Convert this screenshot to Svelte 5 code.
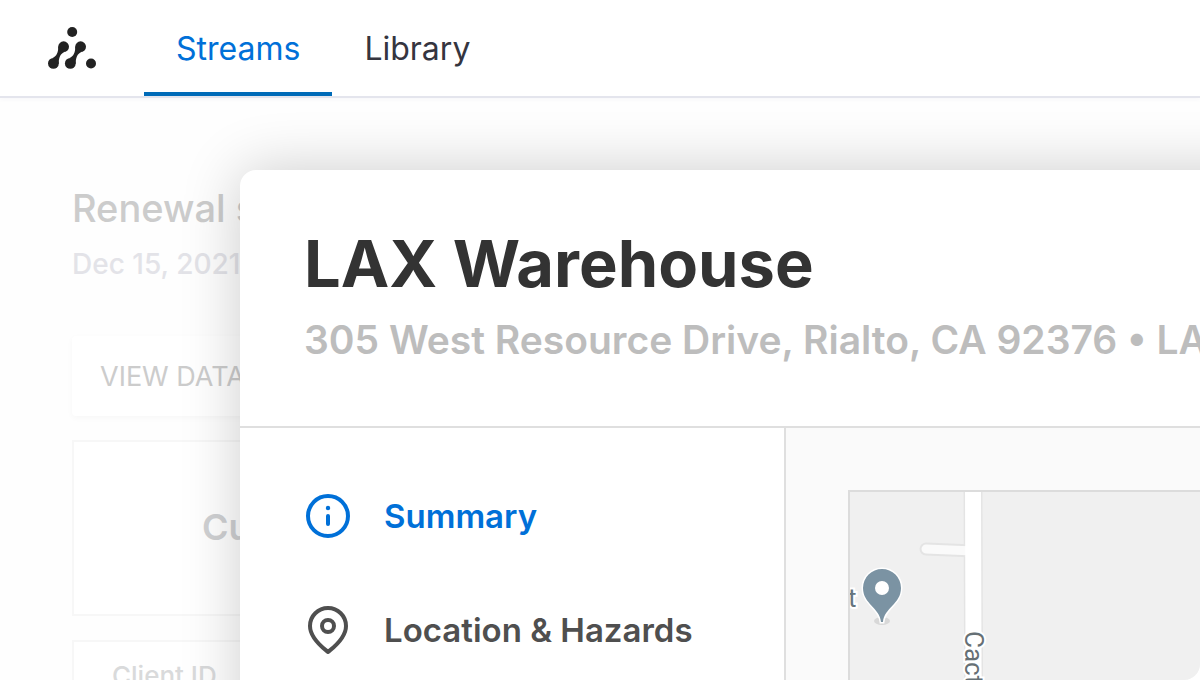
<script>
  let tab = $state('Streams');
  let section = $state('summary');
  const tabs = ['Streams', 'Library'];
</script>

<div class="page">
  <header>
    <a class="logo" href="#home" aria-label="Home">
      <svg width="48" height="42" viewBox="0 0 48 42" fill="#222">
        <circle cx="24.2" cy="5" r="5" />
        <circle cx="15.6" cy="19.7" r="5.4" />
        <circle cx="5.4" cy="36.4" r="5.4" />
        <path d="M10.2 19.500C10.500 25 8.500 29.500 4.600 31L10.800 37C10.500 31 12.500 26.600 16.400 25.100Z" />
        <circle cx="32.6" cy="19.7" r="5.4" />
        <circle cx="22.3" cy="36.4" r="5.4" />
        <path d="M27.200 19.500C27.500 25 25.500 29.500 21.600 31L27.800 37C27.500 31 29.500 26.600 33.400 25.100Z" />
        <circle cx="43" cy="36.5" r="5" />
      </svg>
    </a>
    <nav class="tabs" aria-label="Main">
      {#each tabs as name}
        <a href="#{name.toLowerCase()}" class:active={tab === name} onclick={() => (tab = name)}>{name}</a>
      {/each}
    </nav>
  </header>

  <div class="stage">
    <main>
      <h2>Renewal submission</h2>
      <p class="date">Dec 15, 2021</p>
      <button class="view" type="button">VIEW DATA</button>
      <section class="customer">Customer</section>
      <section class="client">Client ID</section>
    </main>

    <div class="modal" role="dialog" aria-labelledby="place">
      <div class="modal-head">
        <h1 id="place">LAX Warehouse</h1>
        <p>305 West Resource Drive, Rialto, CA 92376 • LAX</p>
      </div>
      <div class="modal-body">
        <nav class="side" aria-label="Sections">
          <a href="#summary" class:active={section === 'summary'} onclick={() => (section = 'summary')}>
            <svg width="48" height="48" viewBox="0 0 48 48" fill="none" stroke="currentColor" stroke-width="4" stroke-linecap="round">
              <circle cx="24" cy="24" r="20" />
              <path d="M24 24v8" />
              <circle cx="24" cy="16" r="2.2" fill="currentColor" stroke="none" />
            </svg>
            <span>Summary</span>
          </a>
          <a href="#location" class:active={section === 'location'} onclick={() => (section = 'location')}>
            <svg width="48" height="48" viewBox="0 0 48 48" fill="none" stroke="currentColor" stroke-width="4" stroke-linejoin="round">
              <path d="M24 46C20 42.500 6 33 6 20A18 18 0 0 1 42 20C42 33 28 42.500 24 46Z" />
              <circle cx="24" cy="20" r="6" />
            </svg>
            <span>Location &amp; Hazards</span>
          </a>
        </nav>
        <div class="content">
          <div class="map">
            <svg width="100%" height="320" role="img" aria-label="Map">
              <g stroke-linecap="round">
                <path d="M76 57L124 59" stroke="#e4e4e4" stroke-width="13" />
                <path d="M123 -10L124 340" stroke="#e4e4e4" stroke-width="19" />
                <path d="M76 57L124 59" stroke="#fafafa" stroke-width="9" />
                <path d="M123 -10L124 340" stroke="#fff" stroke-width="16" />
              </g>
              <text class="place" x="-2" y="115">t</text>
              <text class="road" transform="translate(115 139) rotate(90)">Cactus Ave</text>
              <ellipse cx="32" cy="129" rx="8" ry="4" fill="#d2d2d2" opacity="0.8" />
              <path d="M31 130C30 116 13 112 13 96A19 19 0 0 1 51 96C51 112 34 116 33 130Z" stroke="#fff" stroke-width="3" fill="#7b93a3" paint-order="stroke" />
              <circle cx="32" cy="96" r="7" fill="#fff" />
            </svg>
          </div>
        </div>
      </div>
    </div>
  </div>
</div>

<style>
  :global(body) {
    margin: 0;
    background: #fff;
  }
  .page {
    height: 100vh;
    display: flex;
    flex-direction: column;
    overflow: hidden;
    border-bottom-right-radius: 16px;
    background: #fefefe;
    font-family: Inter, "Liberation Sans", sans-serif;
  }
  h1, h2, p {
    margin: 0;
  }
  a {
    color: inherit;
    text-decoration: none;
  }
  header {
    display: flex;
    flex: none;
    height: 96px;
    padding-left: 48px;
    border-bottom: 2px solid #e4e5ed;
    background: #fff;
    box-shadow: 0 2px 4px rgba(60, 70, 120, 0.03);
  }
  .logo {
    display: flex;
    align-items: center;
    width: 96px;
  }
  .logo svg {
    display: block;
  }
  .tabs {
    display: flex;
  }
  .tabs a {
    box-sizing: border-box;
    height: 96px;
    padding: 0 32px;
    border-bottom: 4px solid transparent;
    font-size: 32px;
    line-height: 98px;
    color: #35353f;
  }
  .tabs a.active {
    color: #0070d8;
    border-color: #006bb8;
  }
  .stage {
    position: relative;
    flex: 1;
    min-height: 0;
  }
  main {
    display: flex;
    flex-direction: column;
    padding: 86px 72px 0;
  }
  h2 {
    font-size: 38px;
    line-height: 48px;
    font-weight: 500;
    color: #ccc;
  }
  .date {
    margin-top: 14px;
    font-size: 28px;
    line-height: 36px;
    font-weight: 500;
    color: #e3e3e8;
  }
  .view {
    height: 80px;
    margin-top: 54px;
    padding: 0 28px;
    border: 0;
    border-radius: 4px;
    background: #fff;
    box-shadow: 0 2px 6px rgba(0, 0, 0, 0.03);
    font: inherit;
    font-size: 27px;
    text-align: left;
    color: #ccc;
  }
  .customer,
  .client {
    box-sizing: border-box;
    margin-top: 24px;
    border: 2px solid #f7f7f7;
    background: #fff;
  }
  .customer {
    height: 176px;
    padding-left: 128px;
    font-size: 36px;
    line-height: 170px;
    font-weight: 600;
    color: #d0d1d3;
  }
  .client {
    height: 176px;
    padding: 16px 38px;
    font-size: 26px;
    line-height: 36px;
    font-weight: 500;
    color: #d9dadb;
  }
  .modal {
    position: absolute;
    top: 72px;
    right: -80px;
    bottom: -80px;
    left: 240px;
    display: flex;
    flex-direction: column;
    overflow: hidden;
    border-top-left-radius: 16px;
    background: #fff;
    box-shadow: 0 0 60px rgba(0, 0, 0, 0.2);
  }
  .modal-head {
    padding: 56px 64px 62px;
    border-bottom: 2px solid #dfdfdf;
    white-space: nowrap;
  }
  h1 {
    font-size: 65px;
    line-height: 76px;
    font-weight: 700;
    color: #333;
  }
  .modal-head p {
    margin-top: 14px;
    font-size: 39px;
    line-height: 48px;
    font-weight: 600;
    color: #bdbdbd;
  }
  .modal-body {
    display: flex;
    flex: 1;
  }
  .side {
    display: flex;
    flex-direction: column;
    flex: none;
    gap: 66px;
    box-sizing: border-box;
    width: 546px;
    padding: 64px;
    border-right: 2px solid #dfdfdf;
  }
  .side a {
    display: flex;
    align-items: center;
    gap: 32px;
    font-size: 33px;
    line-height: 48px;
    font-weight: 600;
    color: #4f4f4f;
  }
  .side a.active {
    color: #0070d8;
  }
  .content {
    flex: 1;
    min-width: 0;
    padding: 62px 0 0 62px;
    background: #fafafa;
  }
  .map {
    border: 2px solid #dcdcdc;
    border-right: 0;
    background: #f0f0f0;
  }
  .map svg {
    display: block;
  }
  .place,
  .road {
    font-family: Roboto, sans-serif;
    font-size: 26px;
    fill: #66757f;
    stroke: #fff;
    stroke-width: 4px;
    paint-order: stroke;
  }
  .road {
    fill: #667075;
  }
</style>
